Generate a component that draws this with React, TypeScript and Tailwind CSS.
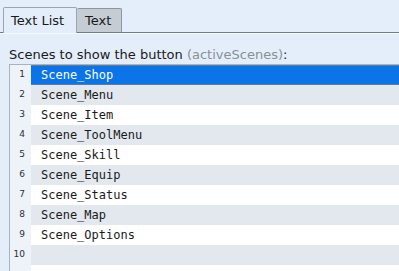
import React from "react";

const items = [
  "Scene_Shop",
  "Scene_Menu",
  "Scene_Item",
  "Scene_ToolMenu",
  "Scene_Skill",
  "Scene_Equip",
  "Scene_Status",
  "Scene_Map",
  "Scene_Options",
  "",
  "",
];

export default function App() {
  return (
    <div
      className="w-[399px] h-[271px] overflow-hidden bg-[#e4eefa] text-[13px] text-[#1a1a1a] flex flex-col"
      style={{ fontFamily: '"DejaVu Sans", sans-serif' }}
    >
      <div className="flex items-end h-[32px] pl-[3px] shrink-0">
        <div className="h-[26px] w-[74px] pl-[7px] pt-[1px] flex items-center border border-b-0 border-[#9aa4ae] rounded-t-[2px] bg-[#e4eefa] relative z-10 -mb-px">
          Text List
        </div>
        <div className="h-[24px] w-[45px] pl-[8px] pt-[1px] flex items-center border border-l-0 border-b-0 border-[#8e969e] rounded-t-[2px] bg-[#c6ccd3]">
          Text
        </div>
        <div className="flex-1" />
      </div>
      <div className="h-px bg-[#6e7d8c] shrink-0" />
      <div className="h-px bg-[#f4f8fc] shrink-0" />
      <div className="pl-[9px] pt-[13px] h-[30px] shrink-0 leading-[16px]">
        Scenes to show the button <span className="text-[#8a8f96]">(activeScenes)</span>:
      </div>
      <div className="ml-[9px] flex-1 border-l border-t border-[#a9b3bd] flex flex-col">
        {items.map((t, i) => {
          const sel = i === 0;
          const alt = i % 2 === 1;
          return (
            <div key={i} className="flex h-[20px] shrink-0">
              <div className="w-[21px] shrink-0 bg-[#eef3f9] text-[9px] text-[#2a2f35] flex items-center justify-end pr-[6px]">
                {i < 10 ? i + 1 : ""}
              </div>
              <div
                className={
                  "flex-1 flex items-center pl-[10px] text-[12px] " +
                  (sel
                    ? "bg-[#0a74e8] text-white border-y border-[#5c7d9e]"
                    : alt
                    ? "bg-[#e2e8ee]"
                    : "bg-white")
                }
                style={{ fontFamily: '"DejaVu Sans Mono", monospace' }}
              >
                {t}
              </div>
            </div>
          );
        })}
      </div>
    </div>
  );
}
